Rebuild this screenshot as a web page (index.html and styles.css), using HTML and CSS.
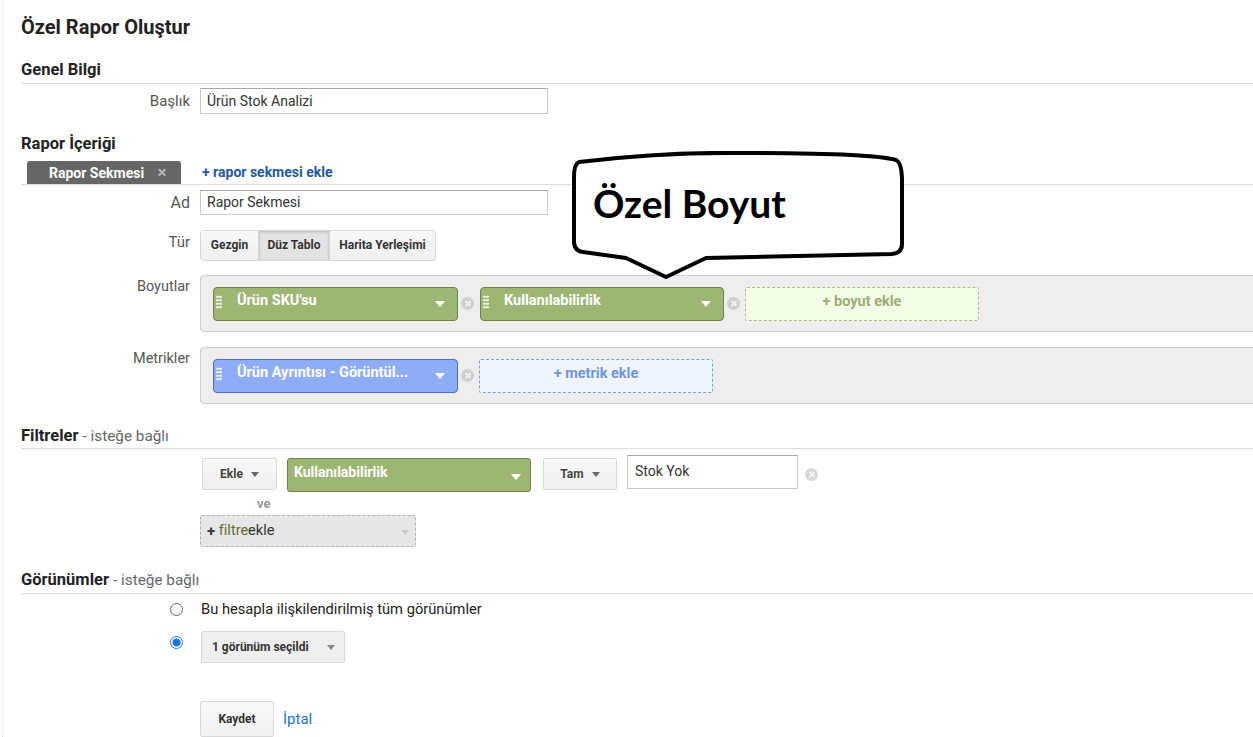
FILE: index.html
```html
<!DOCTYPE html>
<html lang="tr">
<head>
<meta charset="utf-8">
<title>Özel Rapor Oluştur</title>
<link rel="stylesheet" href="styles.css">
</head>
<body>
<div class="page">
  <h1 class="title">Özel Rapor Oluştur</h1>

  <h2 class="sec sec-line">Genel Bilgi</h2>
  <div class="row r-baslik">
    <div class="lbl lbl-sm">Başlık</div>
    <div class="input">Ürün Stok Analizi</div>
  </div>

  <h2 class="sec sec-content">Rapor İçeriği</h2>
  <div class="tabbar">
    <div class="tab">Rapor Sekmesi <span class="tab-x">×</span></div>
    <a class="addtab">+ rapor sekmesi ekle</a>
  </div>

  <div class="row r-ad">
    <div class="lbl">Ad</div>
    <div class="input input-ad">Rapor Sekmesi</div>
  </div>

  <div class="row r-tur">
    <div class="lbl lbl-top">Tür</div>
    <div class="btngroup">
      <span class="gbtn b1">Gezgin</span>
      <span class="gbtn b2 pressed">Düz Tablo</span>
      <span class="gbtn b3">Harita Yerleşimi</span>
    </div>
  </div>

  <div class="row r-boyut">
    <div class="lbl lbl-box">Boyutlar</div>
    <div class="well">
      <div class="chip green"><span class="grip"></span><span class="chip-t">Ürün SKU'su</span><span class="caret"></span></div>
      <span class="rm"></span>
      <div class="chip green chip2"><span class="grip"></span><span class="chip-t">Kullanılabilirlik</span><span class="caret"></span></div>
      <span class="rm"></span>
      <div class="add add-green">+ boyut ekle</div>
    </div>
  </div>

  <div class="row r-metrik">
    <div class="lbl lbl-box">Metrikler</div>
    <div class="well">
      <div class="chip blue"><span class="grip"></span><span class="chip-t">Ürün Ayrıntısı - Görüntül...</span><span class="caret"></span></div>
      <span class="rm"></span>
      <div class="add add-blue">+ metrik ekle</div>
    </div>
  </div>

  <h2 class="sec sec-line sec-filt">Filtreler <span class="opt">- isteğe bağlı</span></h2>
  <div class="filterrow">
    <span class="sbtn s-ekle">Ekle <span class="tri"></span></span>
    <div class="fchip">Kullanılabilirlik<span class="caret"></span></div>
    <span class="sbtn s-tam">Tam <span class="tri"></span></span>
    <div class="finput">Stok Yok</div>
    <span class="rm rm-f"></span>
  </div>
  <div class="ve">ve</div>
  <div class="addfilter"><b>+</b>&nbsp;<span class="ft">filtre</span>ekle<span class="tri tri-light"></span></div>

  <h2 class="sec sec-line sec-gor">Görünümler <span class="opt">- isteğe bağlı</span></h2>
  <div class="opt-row opt1">
    <span class="radio"></span>
    <span class="opt-t">Bu hesapla ilişkilendirilmiş tüm görünümler</span>
  </div>
  <div class="opt-row opt2">
    <span class="radio on"></span>
    <span class="sbtn s-gor">1 görünüm seçildi <span class="tri"></span></span>
  </div>

  <div class="actions">
    <span class="sbtn s-save">Kaydet</span>
    <a class="cancel">İptal</a>
  </div>

  <div class="bubble">
    <svg class="bubble-svg" width="336" height="132" viewBox="0 0 336 132">
      <path d="M8 11 Q 90 1 170 2 Q 300 2 325 9 Q 331 12 331 30 L 331 93 Q 331 102 321 103 L 135 107 L 95 126 L 55 107 L 12 101 Q 3 100 3 90 L 3 26 Q 3 13 8 11 Z" fill="#fff" stroke="#000" stroke-width="4" stroke-linejoin="round"/>
    </svg>
    <div class="bubble-t">Özel Boyut</div>
  </div>
</div>
</body>
</html>
```

FILE: styles.css
```css
* { box-sizing: border-box; }
html, body { margin: 0; padding: 0; background: #fff; }
body {
  font-family: Roboto, "Liberation Sans", Arial, sans-serif;
  color: #222;
  width: 1253px;
  height: 737px;
  overflow: hidden;
}
.page {
  position: relative;
  padding: 15px 0 0 18px;
  border-left: 1px dotted #e4e4e4;
  margin-left: 2px;
  min-height: 737px;
}
.title {
  margin: 0;
  font-size: 20px;
  line-height: 24px;
  font-weight: 700;
  color: #222;
}
.sec {
  margin: 0;
  font-size: 16.5px;
  line-height: 20px;
  font-weight: 700;
  color: #222;
}
.sec-line {
  border-bottom: 1px solid #dcdcdc;
  padding-bottom: 3px;
}
.title + .sec { margin-top: 21px; }
.opt { font-weight: 400; font-size: 15.3px; color: #666; }

.row { display: flex; gap: 10px; }
.lbl {
  width: 169px;
  flex: none;
  text-align: right;
  font-size: 15px;
  color: #555;
  line-height: 24px;
}
.lbl-sm { font-size: 15px; line-height: 26px; }
.lbl-top { line-height: 24px; }
.lbl-box { padding-top: 2px; font-size: 14.5px; line-height: 20px; }

.input {
  width: 348px;
  height: 26px;
  border: 1px solid #c8c8c8;
  border-top-color: #a8a8a8;
  padding: 0 6px;
  font-size: 14px;
  line-height: 24px;
  color: #333;
}
.r-baslik { margin-top: 4px; }
.sec-content { margin-top: 20px; }

.tabbar {
  margin-top: 7px;
  display: flex;
  align-items: flex-end;
  border-bottom: 1px solid #dcdcdc;
}
.tab {
  margin-left: 6px;
  width: 154px;
  height: 23px;
  background: #666;
  border-radius: 3px 3px 0 0;
  color: #fff;
  font-weight: 700;
  font-size: 14px;
  line-height: 23px;
  padding-left: 22px;
}
.tab-x { color: #b5b5b5; font-size: 17px; margin-left: 10px; }
.addtab {
  margin-left: 21px;
  font-size: 14px;
  font-weight: 700;
  color: #1e5a9e;
  line-height: 23px;
  cursor: pointer;
}

.r-ad { margin-top: 5px; }
.input-ad { height: 25px; line-height: 23px; }
.r-ad .lbl { font-size: 16px; line-height: 25px; color: #555; }

.r-tur { margin-top: 15px; }
.btngroup {
  display: flex;
  height: 31px;
  border: 1px solid #d6d6d6;
  border-radius: 3px;
  overflow: hidden;
}
.gbtn {
  font-size: 12px;
  font-weight: 700;
  color: #333;
  line-height: 29px;
  text-align: center;
  background: linear-gradient(#f8f8f8, #f0f0f0);
}
.b1 { width: 57px; }
.b2 { width: 72px; border-left: 1px solid #d6d6d6; border-right: 1px solid #d6d6d6; }
.b3 { width: 105px; }
.pressed { background: #e3e3e3; box-shadow: inset 0 1px 3px rgba(0,0,0,.2); }

.r-boyut { margin-top: 14px; }
.r-metrik { margin-top: 15px; }
.well {
  flex: 1;
  height: 57px;
  background: #eee;
  border: 1px solid #cfcfcf;
  border-right: none;
  border-radius: 4px 0 0 4px;
  padding: 11px 12px;
  display: flex;
  align-items: center;
}
.chip {
  width: 245px;
  height: 34px;
  border-radius: 4px;
  display: flex;
  align-items: center;
  color: #fff;
  font-size: 14.5px;
  font-weight: 700;
  position: relative;
}
.chip2 { width: 244px; }
.chip.green { background: #9eb674; border: 1px solid #6e8449; }
.chip.blue { background: #8fadf7; border: 1px solid #4f6dc2; }
.grip {
  width: 6px;
  height: 14px;
  margin-left: 2px;
  margin-right: 15px;
  background-image: radial-gradient(circle, rgba(245,248,240,.9) 1.1px, transparent 1.4px);
  background-size: 3px 3.5px;
  margin-top: -4px;
}
.chip-t { flex: 1; margin-top: -6px; }
.caret {
  width: 0; height: 0;
  border-left: 5px solid transparent;
  border-right: 5px solid transparent;
  border-top: 6px solid #fff;
  margin-right: 12px;
}
.rm {
  width: 13px;
  height: 13px;
  border-radius: 50%;
  background: #cfcfcf;
  position: relative;
  flex: none;
}
.rm::before, .rm::after {
  content: "";
  position: absolute;
  left: 6px; top: 3px;
  width: 1.5px; height: 7px;
  background: #f2f2f2;
  transform: rotate(45deg);
}
.rm::after { transform: rotate(-45deg); }
.well .rm { margin: 0 6px 0 3px; }
.add {
  width: 234px;
  height: 34px;
  border-radius: 2px;
  font-size: 14.5px;
  font-weight: 700;
  text-align: center;
  line-height: 28px;
}
.add-green { background: #f3fde8; border: 1px dashed #a9bf7f; color: #9aae73; margin-left: -1px; }
.add-blue { background: #eff4fd; border: 1px dashed #7a9fe2; color: #7194dc; margin-left: -1px; }

.sec-filt { margin-top: 22px; padding-bottom: 2px; }

.filterrow {
  margin-top: 6px;
  margin-left: 181px;
  display: flex;
  align-items: flex-start;
}
.sbtn {
  display: inline-flex;
  align-items: center;
  justify-content: center;
  gap: 8px;
  height: 32px;
  border: 1px solid #d8d8d8;
  border-radius: 2px;
  background: linear-gradient(#f8f8f8, #efefef);
  font-size: 12px;
  font-weight: 700;
  color: #444;
}
.tri {
  width: 0; height: 0;
  border-left: 4px solid transparent;
  border-right: 4px solid transparent;
  border-top: 5px solid #666;
}
.s-ekle { width: 75px; margin-top: 3px; }
.fchip {
  margin-top: 3px;
  margin-left: 10px;
  width: 244px;
  height: 34px;
  background: #9eb674;
  border: 1px solid #6e8449;
  border-radius: 3px;
  color: #fff;
  font-size: 14px;
  font-weight: 700;
  padding: 5px 0 0 6px;
  display: flex;
  justify-content: space-between;
}
.fchip .caret { margin-top: 10px; margin-right: 9px; }
.s-tam { width: 74px; margin-top: 3px; margin-left: 12px; }
.finput {
  margin-left: 10px;
  width: 171px;
  height: 34px;
  border: 1px solid #c8c8c8;
  border-top-color: #a8a8a8;
  font-size: 14px;
  color: #333;
  padding: 7px 0 0 7px;
}
.rm-f { margin: 13px 0 0 7px; background: #d8d8d8; }

.ve {
  margin-left: 236px;
  margin-top: 4px;
  font-size: 13px;
  font-weight: 700;
  color: #999;
  line-height: 16px;
}
.addfilter {
  margin-left: 179px;
  margin-top: 3px;
  width: 216px;
  height: 32px;
  background: #e6e6e6;
  border: 1px dashed #b3b3b3;
  border-radius: 2px;
  font-size: 14.5px;
  color: #333;
  padding: 0 0 0 6px;
  line-height: 28px;
  display: flex;
  align-items: center;
}
.addfilter b { font-size: 15px; }
.ft { color: #5f6e34; }
.tri-light { margin-left: auto; margin-right: 6px; border-top-color: #c8c8c8; margin-top: 2px; }

.sec-gor { margin-top: 23px; padding-bottom: 3px; }
.opt-row { display: flex; align-items: center; padding-left: 149px; }
.opt1 { margin-top: 4px; height: 22px; }
.opt2 { margin-top: 11px; align-items: flex-start; }
.radio {
  width: 13px; height: 13px;
  border: 1px solid #666;
  border-radius: 50%;
  flex: none;
  background: #fff;
}
.radio.on {
  border: 1px solid #1a73e8;
  background: radial-gradient(circle, #1a73e8 3.6px, #fff 4.4px);
  margin-top: 5px;
}
.opt-t { margin-left: 18px; font-size: 14.7px; color: #222; }
.s-gor {
  margin-left: 18px;
  width: 144px;
  height: 32px;
  gap: 18px;
  justify-content: flex-start;
  padding-left: 10px;
  background: #efefef;
  color: #333;
}
.s-gor .tri { border-top-color: #888; }

.actions {
  margin-top: 38px;
  margin-left: 179px;
  display: flex;
  align-items: center;
}
.s-save { width: 74px; height: 36px; color: #333; background: linear-gradient(#f9f9f9, #f1f1f1); }
.cancel { margin-left: 9px; font-size: 15px; color: #1a73c8; cursor: pointer; }

.bubble {
  position: absolute;
  left: 568px;
  top: 151px;
  width: 336px;
  height: 132px;
}
.bubble-svg { position: absolute; left: 0; top: 0; }
.bubble-t {
  position: absolute;
  left: 22px;
  top: 30px;
  font-family: Lato, "Open Sans", sans-serif;
  font-weight: 700;
  font-size: 39px;
  line-height: 44px;
  color: #000;
}
```
